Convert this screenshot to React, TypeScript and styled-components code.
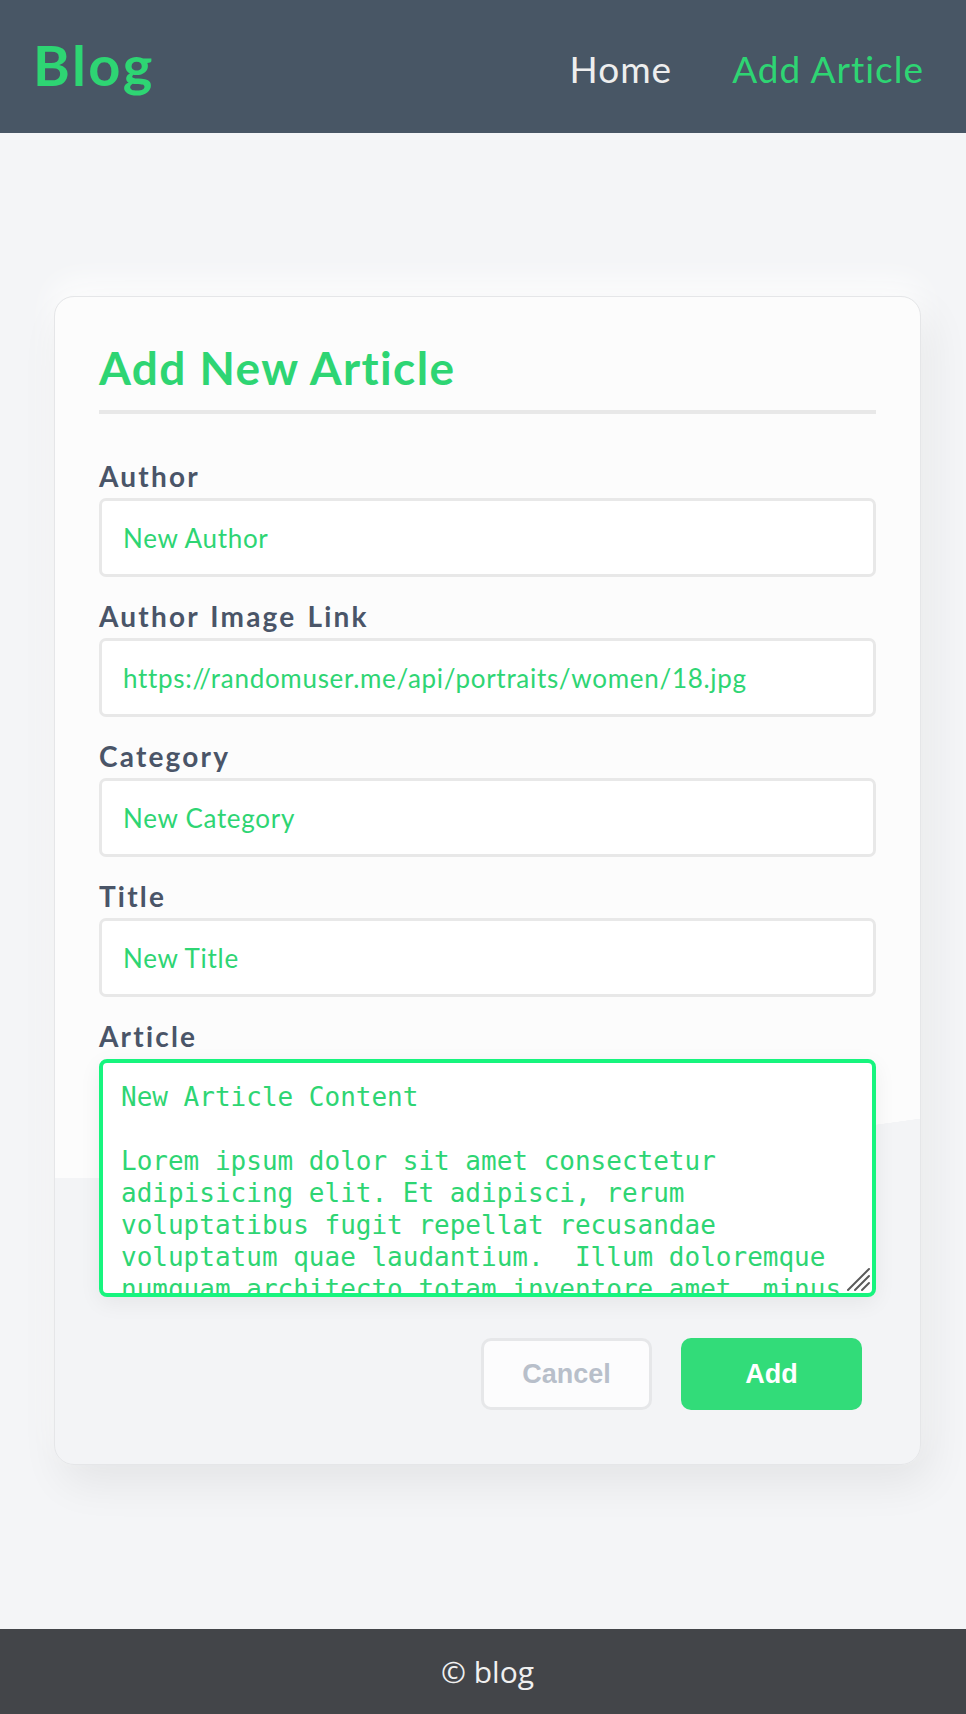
import React from "react";
import styled, { createGlobalStyle } from "styled-components";

const GREEN = "#2ed573";

const GlobalStyle = createGlobalStyle`
  html, body {
    margin: 0;
    padding: 0;
    background: #f4f5f7;
    font-family: Lato, "Noto Sans", sans-serif;
  }
  * { box-sizing: border-box; }
`;

const Header = styled.header`
  display: flex;
  justify-content: space-between;
  align-items: center;
  height: 133px;
  padding: 0 42px 0 33px;
  background: #485665;
`;

const Logo = styled.div`
  font-family: Lato, sans-serif;
  font-size: 56px;
  font-weight: 700;
  line-height: 1.2;
  letter-spacing: 2.5px;
  color: ${GREEN};
  padding-bottom: 3px;
`;

const Nav = styled.nav`
  display: flex;
  align-items: center;
  gap: 60px;
`;

const NavLink = styled.a<{ $active?: boolean }>`
  font-family: Lato, sans-serif;
  font-size: 37px;
  font-weight: 400;
  line-height: 1.2;
  letter-spacing: 1px;
  padding-top: 5px;
  text-decoration: none;
  color: ${(p) => (p.$active ? GREEN : "#eeeeee")};
`;

const Main = styled.main`
  padding: 163px 45px 164px 54px;
`;

const Card = styled.section`
  border: 1px solid #e5e6e8;
  border-radius: 20px;
  padding: 43px 44px 54px 44px;
  background: radial-gradient(
    2400px 881px at 0 0,
    #fcfcfc calc(100% - 1px),
    #f3f4f6 100%
  );
  box-shadow: 8px 18px 44px rgba(0, 0, 0, 0.07),
    0 -14px 30px rgba(255, 255, 255, 0.9);
`;

const Title = styled.h1`
  margin: 0 0 45px 0;
  font-family: Lato, sans-serif;
  font-size: 46px;
  font-weight: 700;
  line-height: 56px;
  letter-spacing: 1.4px;
  color: ${GREEN};
  padding-bottom: 14px;
  border-bottom: 4px solid #e8e8e8;
`;

const Field = styled.div<{ $last?: boolean }>`
  display: flex;
  flex-direction: column;
  margin-bottom: ${(p) => (p.$last ? "0" : "22px")};
`;

const Label = styled.label<{ $gap?: number }>`
  display: block;
  font-family: Lato, sans-serif;
  font-size: 28px;
  font-weight: 700;
  line-height: 34px;
  letter-spacing: 2.2px;
  word-spacing: 2px;
  color: #4a5568;
  margin-bottom: ${(p) => p.$gap ?? 5}px;
`;

const Input = styled.input`
  width: 100%;
  height: 79px;
  border: 3px solid #e8e8e8;
  border-radius: 7px;
  background: #ffffff;
  padding: 0 21px;
  font-family: Lato, sans-serif;
  font-size: 26px;
  font-weight: 400;
  letter-spacing: 0.7px;
  color: ${GREEN};
  outline: none;
`;

const AreaWrap = styled.div`
  position: relative;
`;

const TextArea = styled.textarea`
  display: block;
  width: 100%;
  height: 238px;
  border: 4px solid #17f57e;
  border-radius: 8px;
  background: #ffffff;
  padding: 18px 18px;
  font-family: "DejaVu Sans Mono", "Liberation Mono", monospace;
  font-size: 26px;
  line-height: 32px;
  color: ${GREEN};
  outline: none;
  overflow: hidden;
  resize: none;
  box-shadow: 0 6px 22px rgba(0, 0, 0, 0.06);
`;

const Grip = styled.svg`
  position: absolute;
  right: 5px;
  bottom: 5px;
  width: 26px;
  height: 26px;
  pointer-events: none;
`;

const Actions = styled.div`
  display: flex;
  justify-content: flex-end;
  gap: 29px;
  margin-top: 41px;
  padding-right: 14px;
`;

const Button = styled.button<{ $primary?: boolean }>`
  height: 72px;
  width: ${(p) => (p.$primary ? "181px" : "171px")};
  border-radius: 10px;
  border: ${(p) => (p.$primary ? "none" : "3px solid #e6e7e9")};
  background: ${(p) => (p.$primary ? "#32dc79" : "#fcfcfd")};
  color: ${(p) => (p.$primary ? "#ffffff" : "#b8bfca")};
  font-family: "Liberation Sans", Arial, sans-serif;
  font-size: 27px;
  font-weight: 700;
  cursor: pointer;
`;

const Footer = styled.footer`
  display: flex;
  align-items: center;
  justify-content: center;
  height: 85px;
  padding-left: 9px;
  background: #434549;
  color: #f0f0f0;
  font-family: "Open Sans", sans-serif;
  font-size: 30px;
`;

const ARTICLE = `New Article Content

Lorem ipsum dolor sit amet consectetur adipisicing elit. Et adipisci, rerum voluptatibus fugit repellat recusandae voluptatum quae laudantium.  Illum doloremque numquam architecto totam inventore amet, minus quibusdam voluptate nobis eos dolore sint odit, quas ipsa similique.`;

const fields = [
  { label: "Author", value: "New Author" },
  { label: "Author Image Link", value: "https://randomuser.me/api/portraits/women/18.jpg" },
  { label: "Category", value: "New Category" },
  { label: "Title", value: "New Title" },
];

export default function App() {
  return (
    <>
      <GlobalStyle />
      <Header>
        <Logo>Blog</Logo>
        <Nav>
          <NavLink href="#">Home</NavLink>
          <NavLink href="#" $active>
            Add Article
          </NavLink>
        </Nav>
      </Header>
      <Main>
        <Card>
          <Title>Add New Article</Title>
          <form onSubmit={(e) => e.preventDefault()}>
            {fields.map((f) => (
              <Field key={f.label}>
                <Label>{f.label}</Label>
                <Input type="text" defaultValue={f.value} />
              </Field>
            ))}
            <Field $last>
              <Label $gap={6}>Article</Label>
              <AreaWrap>
                <TextArea defaultValue={ARTICLE} />
                <Grip viewBox="0 0 26 26" aria-hidden="true">
                  <g stroke="#5a5a5a" strokeWidth="2" strokeLinecap="round">
                    <line x1="24" y1="3" x2="3" y2="24" />
                    <line x1="24" y1="10" x2="10" y2="24" />
                    <line x1="24" y1="17" x2="17" y2="24" />
                  </g>
                </Grip>
              </AreaWrap>
            </Field>
            <Actions>
              <Button type="button">Cancel</Button>
              <Button type="submit" $primary>
                Add
              </Button>
            </Actions>
          </form>
        </Card>
      </Main>
      <Footer>© blog</Footer>
    </>
  );
}
